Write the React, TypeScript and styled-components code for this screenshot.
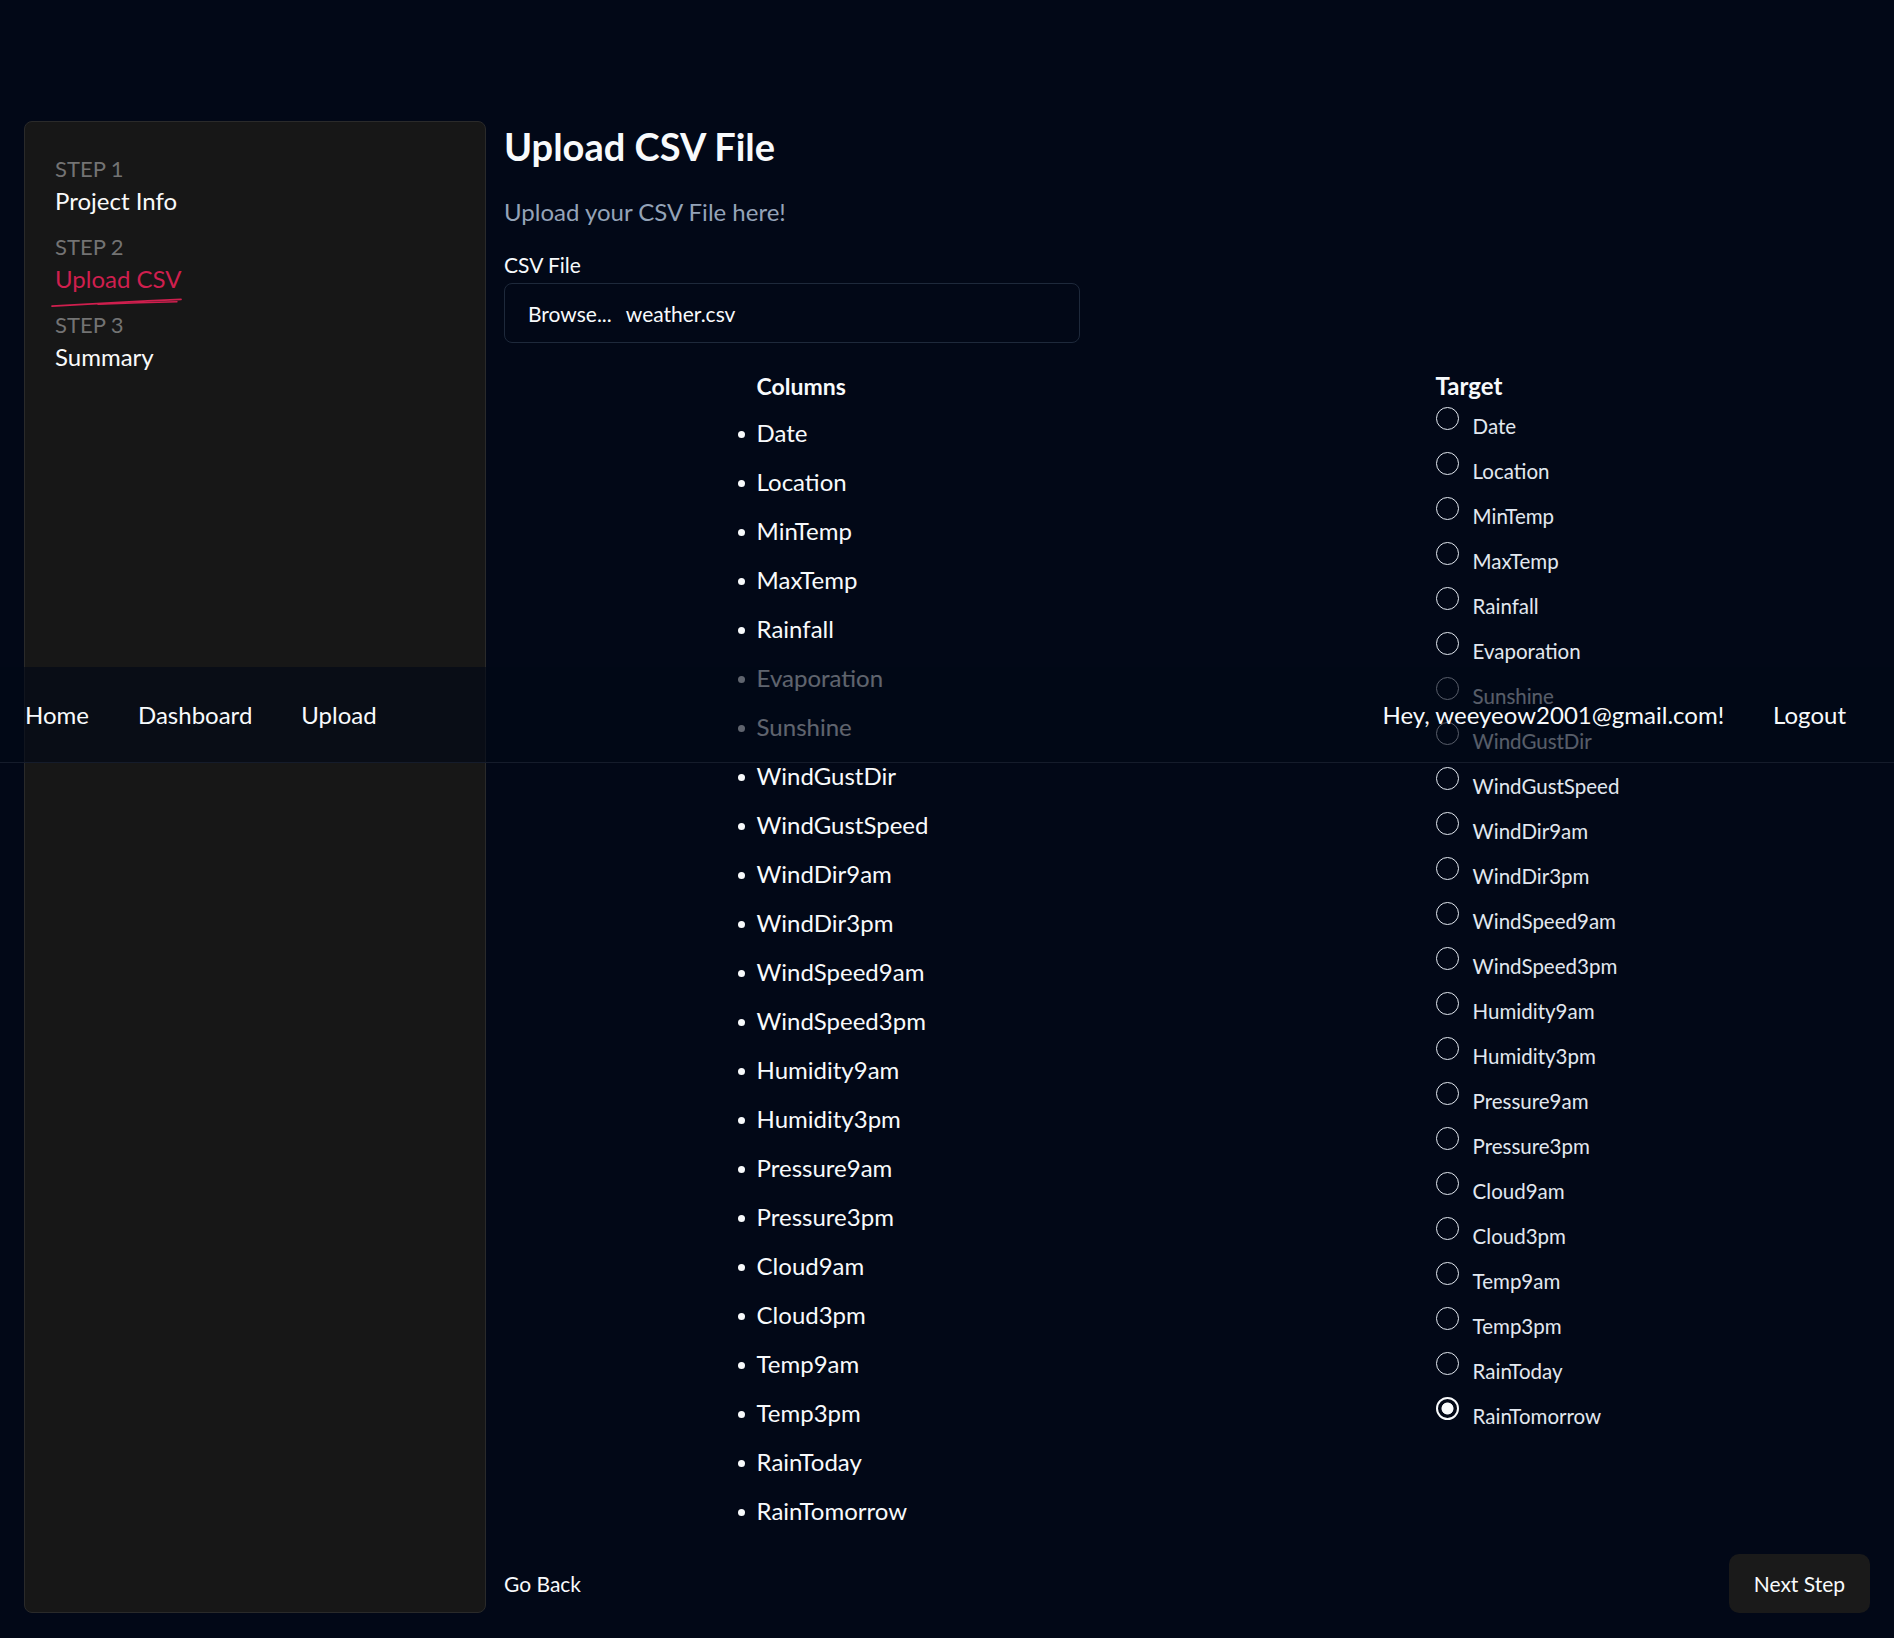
import { useState } from 'react';
import styled, { createGlobalStyle } from 'styled-components';

const GlobalStyle = createGlobalStyle`
    html, body {
        margin: 0;
        padding: 0;
        background: #020817;
    }
    body {
        font-family: Lato, "Open Sans", sans-serif;
        color: #f8fafc;
    }
    * {
        box-sizing: border-box;
    }
`;

const Page = styled.div`
    position: relative;
    min-height: 1638px;
    padding: 121px 24px 25px 24px;
    display: flex;
    gap: 18px;
    background: #020817;
`;

const NavBar = styled.nav`
    position: absolute;
    top: 667px;
    left: 0;
    right: 0;
    height: 96px;
    padding: 0 48px 0 25px;
    display: flex;
    align-items: center;
    justify-content: space-between;
    background: rgba(2, 8, 23, 0.62);
    border-bottom: 1px solid #151c2b;
    z-index: 10;
`;

const NavGroup = styled.div`
    display: flex;
    align-items: center;
    gap: 49px;
`;

const NavLink = styled.a`
    color: #f8fafc;
    font-size: 24px;
    text-decoration: none;
    cursor: pointer;
`;

const Sidebar = styled.aside`
    width: 462px;
    flex-shrink: 0;
    background: #171717;
    border: 1px solid #2a2a2a;
    border-radius: 8px;
    padding: 32px 30px;
    display: flex;
    flex-direction: column;
    gap: 14px;
`;

const Step = styled.div`
    display: flex;
    flex-direction: column;
    align-items: flex-start;
`;

const StepLabel = styled.span`
    font-size: 22px;
    line-height: 30px;
    color: #737373;
    text-transform: uppercase;
`;

const StepTitle = styled.span<{ $active?: boolean }>`
    position: relative;
    display: inline-block;
    font-size: 24px;
    line-height: 34px;
    color: ${(p) => (p.$active ? '#cf1f4e' : '#fafafa')};
`;

const Scribble = styled.svg`
    position: absolute;
    left: -3px;
    top: 100%;
    width: 132px;
    height: 14px;
    overflow: visible;
`;

const Main = styled.main`
    flex: 1;
    display: flex;
    flex-direction: column;
    padding-top: 2px;
`;

const Heading = styled.h1`
    margin: 0;
    font-size: 38px;
    line-height: 46px;
    font-weight: 700;
    color: #f8fafc;
`;

const Subtitle = styled.p`
    margin: 27px 0 0 0;
    font-size: 24px;
    line-height: 32px;
    color: #94a3b8;
`;

const FieldLabel = styled.label`
    margin-top: 23px;
    font-size: 21px;
    line-height: 28px;
    color: #f8fafc;
`;

const FileBox = styled.div`
    margin-top: 4px;
    width: 576px;
    height: 60px;
    border: 1px solid #1e293b;
    border-radius: 8px;
    padding: 0 23px;
    display: flex;
    align-items: center;
    font-size: 21px;
    color: #f8fafc;
`;

const BrowseText = styled.span`
    margin-right: 14px;
`;

const ColumnsGrid = styled.div`
    margin: 17px 0 0 -4px;
    display: grid;
    grid-template-columns: 1fr 1fr;
    justify-items: center;
    align-items: start;
`;

const Block = styled.div`
    display: flex;
    flex-direction: column;
`;

const BlockTitle = styled.div<{ $size: number }>`
    padding-top: 3px;
    font-size: ${(p) => p.$size}px;
    line-height: 46px;
    font-weight: 700;
    color: #f8fafc;
`;

const ColumnList = styled.ul`
    margin: -1px 0 0 0;
    padding: 0;
    list-style: none;
`;

const ColumnItem = styled.li`
    position: relative;
    font-size: 24px;
    line-height: 49px;
    color: #f8fafc;

    &::before {
        content: '';
        position: absolute;
        left: -19px;
        top: 23px;
        width: 7px;
        height: 7px;
        border-radius: 50%;
        background: #f8fafc;
    }
`;

const RadioList = styled.div`
    margin-top: -1.6px;
    display: flex;
    flex-direction: column;
`;

const RadioRow = styled.label`
    height: 45px;
    display: flex;
    align-items: flex-start;
    gap: 14px;
    cursor: pointer;
`;

const Radio = styled.input`
    appearance: none;
    margin: 0;
    width: 23px;
    height: 23px;
    flex-shrink: 0;
    border: 1.3px solid #e2e8f0;
    border-radius: 50%;
    background: transparent;
    cursor: pointer;

    &:checked {
        border: 2.3px solid #f8fafc;
        background: radial-gradient(circle, #f8fafc 0 5.6px, transparent 6.4px);
    }
`;

const RadioText = styled.span`
    margin-top: 6px;
    font-size: 20.5px;
    line-height: 26px;
    color: #e2e8f0;
`;

const Footer = styled.div`
    margin-top: auto;
    display: flex;
    align-items: center;
    justify-content: space-between;
`;

const BackButton = styled.button`
    height: 59px;
    padding: 0;
    border: none;
    background: transparent;
    color: #f8fafc;
    font-family: inherit;
    font-size: 21px;
    cursor: pointer;
`;

const NextButton = styled.button`
    height: 59px;
    padding: 0 25px;
    border: none;
    border-radius: 10px;
    background: #1a1a1a;
    color: #f8fafc;
    font-family: inherit;
    font-size: 21px;
    cursor: pointer;
`;

const columns = [
    'Date', 'Location', 'MinTemp', 'MaxTemp', 'Rainfall', 'Evaporation', 'Sunshine',
    'WindGustDir', 'WindGustSpeed', 'WindDir9am', 'WindDir3pm', 'WindSpeed9am',
    'WindSpeed3pm', 'Humidity9am', 'Humidity3pm', 'Pressure9am', 'Pressure3pm',
    'Cloud9am', 'Cloud3pm', 'Temp9am', 'Temp3pm', 'RainToday', 'RainTomorrow',
];

const steps = [
    { label: 'Step 1', title: 'Project Info' },
    { label: 'Step 2', title: 'Upload CSV' },
    { label: 'Step 3', title: 'Summary' },
];

const App = () => {
    const [target, setTarget] = useState('RainTomorrow');
    const activeStep = 1;

    return (
        <Page>
            <GlobalStyle />
            <Sidebar>
                {steps.map((step, index) => (
                    <Step key={step.label}>
                        <StepLabel>{step.label}</StepLabel>
                        <StepTitle $active={index === activeStep}>
                            {step.title}
                            {index === activeStep && (
                                <Scribble viewBox="0 0 132 14">
                                    <path d="M0 10.2 Q 62 6.6 129 3.4" stroke="#cf1f4e" strokeWidth="1.7" fill="none" strokeLinecap="round" />
                                    <path d="M46 8.3 Q 88 6.4 125 5.8" stroke="#cf1f4e" strokeWidth="1.4" fill="none" strokeLinecap="round" />
                                </Scribble>
                            )}
                        </StepTitle>
                    </Step>
                ))}
            </Sidebar>

            <Main>
                <Heading>Upload CSV File</Heading>
                <Subtitle>Upload your CSV File here!</Subtitle>
                <FieldLabel>CSV File</FieldLabel>
                <FileBox>
                    <BrowseText>Browse...</BrowseText>
                    <span>weather.csv</span>
                </FileBox>

                <ColumnsGrid>
                    <Block>
                        <BlockTitle $size={23}>Columns</BlockTitle>
                        <ColumnList>
                            {columns.map((col) => (
                                <ColumnItem key={col}>{col}</ColumnItem>
                            ))}
                        </ColumnList>
                    </Block>
                    <Block>
                        <BlockTitle $size={24}>Target</BlockTitle>
                        <RadioList>
                            {columns.map((col) => (
                                <RadioRow key={col}>
                                    <Radio
                                        type="radio"
                                        name="target"
                                        checked={target === col}
                                        onChange={() => setTarget(col)}
                                    />
                                    <RadioText>{col}</RadioText>
                                </RadioRow>
                            ))}
                        </RadioList>
                    </Block>
                </ColumnsGrid>

                <Footer>
                    <BackButton>Go Back</BackButton>
                    <NextButton>Next Step</NextButton>
                </Footer>
            </Main>

            <NavBar>
                <NavGroup>
                    <NavLink>Home</NavLink>
                    <NavLink>Dashboard</NavLink>
                    <NavLink>Upload</NavLink>
                </NavGroup>
                <NavGroup>
                    <NavLink>Hey, weeyeow2001@gmail.com!</NavLink>
                    <NavLink>Logout</NavLink>
                </NavGroup>
            </NavBar>
        </Page>
    );
};

export default App;
